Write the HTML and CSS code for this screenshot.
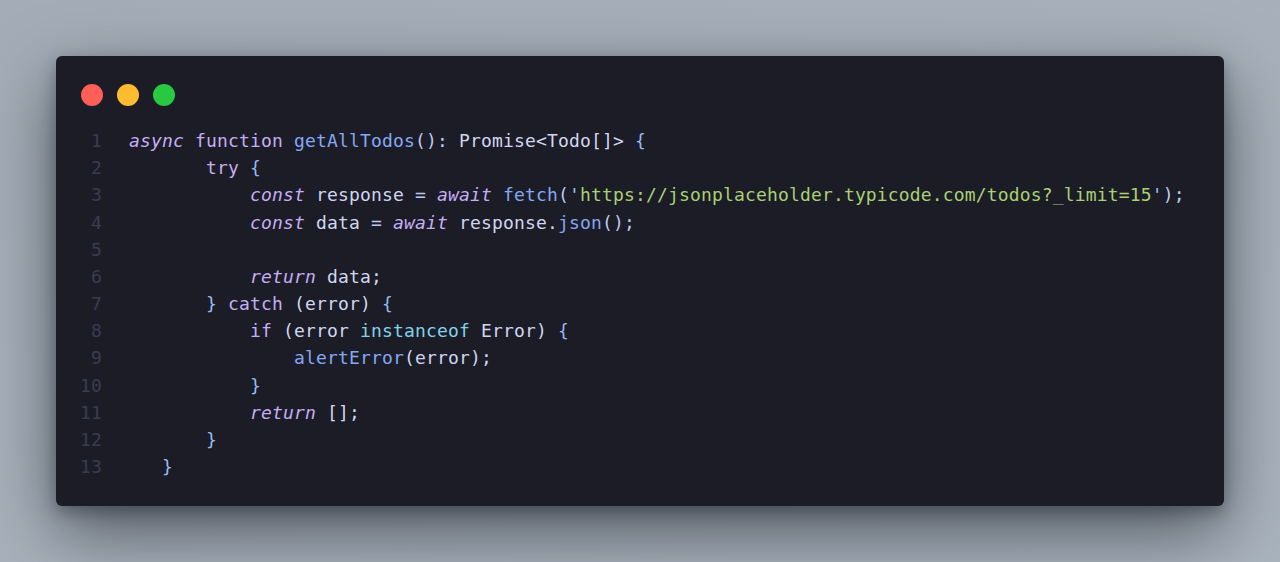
FILE: index.html
```html
<!DOCTYPE html>
<html>
<head>
<meta charset="utf-8">
<link rel="stylesheet" href="styles.css">
</head>
<body>
<div class="window">
  <div class="dots">
    <span class="dot red"></span>
    <span class="dot yellow"></span>
    <span class="dot green"></span>
  </div>
  <div class="code">
    <div class="line"><span class="ln">1</span><span class="src"><span class="kw">async</span> <span class="st">function</span> <span class="fn">getAllTodos</span><span class="pn">():</span> <span class="tx">Promise&lt;Todo[]&gt;</span> <span class="br">{</span></span></div>
    <div class="line"><span class="ln">2</span><span class="src">       <span class="st">try</span> <span class="br">{</span></span></div>
    <div class="line"><span class="ln">3</span><span class="src">           <span class="kw">const</span> <span class="tx">response</span> <span class="pn">=</span> <span class="kw">await</span> <span class="fn">fetch</span><span class="pn">(</span><span class="q">'</span><span class="str">https://jsonplaceholder.typicode.com/todos?_limit=15</span><span class="q">'</span><span class="pn">);</span></span></div>
    <div class="line"><span class="ln">4</span><span class="src">           <span class="kw">const</span> <span class="tx">data</span> <span class="pn">=</span> <span class="kw">await</span> <span class="tx">response.</span><span class="fn">json</span><span class="pn">();</span></span></div>
    <div class="line"><span class="ln">5</span><span class="src"> </span></div>
    <div class="line"><span class="ln">6</span><span class="src">           <span class="kw">return</span> <span class="tx">data;</span></span></div>
    <div class="line"><span class="ln">7</span><span class="src">       <span class="br">}</span> <span class="st">catch</span> <span class="tx">(error)</span> <span class="br">{</span></span></div>
    <div class="line"><span class="ln">8</span><span class="src">           <span class="st">if</span> <span class="tx">(error</span> <span class="op">instanceof</span> <span class="tx">Error)</span> <span class="br">{</span></span></div>
    <div class="line"><span class="ln">9</span><span class="src">               <span class="fn">alertError</span><span class="tx">(error);</span></span></div>
    <div class="line"><span class="ln">10</span><span class="src">           <span class="br">}</span></span></div>
    <div class="line"><span class="ln">11</span><span class="src">           <span class="kw">return</span> <span class="tx">[];</span></span></div>
    <div class="line"><span class="ln">12</span><span class="src">       <span class="br">}</span></span></div>
    <div class="line"><span class="ln">13</span><span class="src">   <span class="br">}</span></span></div>
  </div>
</div>
</body>
</html>
```

FILE: styles.css
```css
html, body {
  margin: 0;
  height: 100%;
}
body {
  background: linear-gradient(160deg, #a4adb7 0%, #a9b2bc 60%, #aab4be 100%);
  padding: 56px;
  box-sizing: border-box;
}
.window {
  width: 1168px;
  height: 450px;
  background: #1c1c27;
  border-radius: 6px;
  box-shadow: 0 26px 70px rgba(20, 25, 35, 0.6), 0 6px 16px rgba(20, 25, 35, 0.35);
  box-sizing: border-box;
  padding: 28px 0 0 0;
}
.dots {
  display: flex;
  gap: 14px;
  padding-left: 25px;
}
.dot {
  width: 22px;
  height: 22px;
  border-radius: 50%;
}
.red { background: #ff5f57; }
.yellow { background: #febc2e; }
.green { background: #28c840; }
.code {
  margin-top: 21px;
  font-family: "DejaVu Sans Mono", "Liberation Mono", monospace;
  font-size: 18px;
  letter-spacing: 0.16px;
  line-height: 27.17px;
  color: #d0d6f0;
}
.line {
  display: flex;
}
.ln {
  width: 46px;
  text-align: right;
  color: #393c51;
  flex: none;
}
.src {
  margin-left: 27px;
  white-space: pre;
}
.kw { color: #c6aef4; font-style: italic; }
.st { color: #c6aef4; }
.fn { color: #84a8f4; }
.pn { color: #bec9f2; }
.tx { color: #d0d6f0; }
.br { color: #93b8f4; }
.str { color: #a8d074; }
.q { color: #93c8f4; }
.op { color: #80d3ea; }
```
